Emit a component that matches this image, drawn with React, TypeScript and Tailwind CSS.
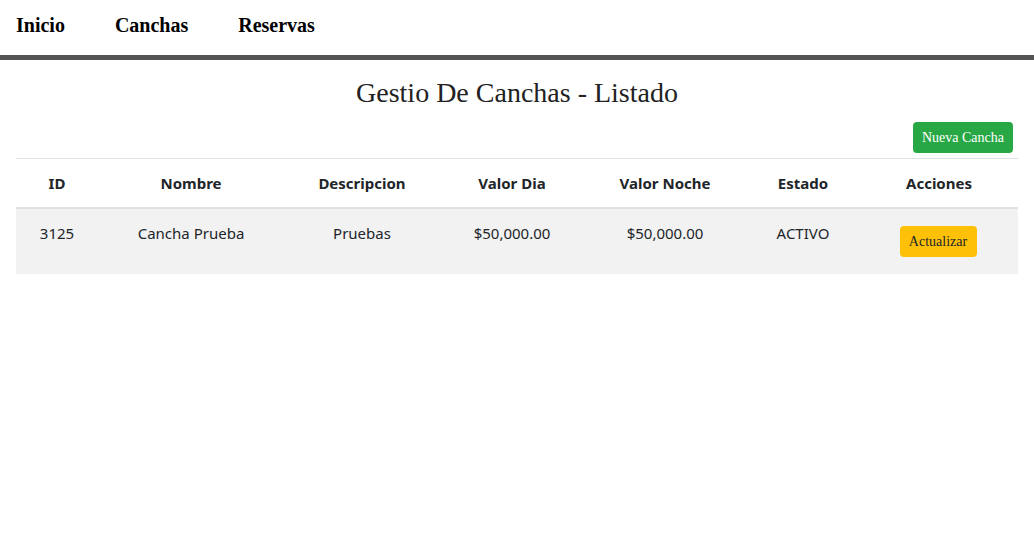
const columns = [
  { label: "ID", width: "w-[82px]" },
  { label: "Nombre", width: "w-[186px]" },
  { label: "Descripcion", width: "w-[156px]" },
  { label: "Valor Dia", width: "w-[144px]" },
  { label: "Valor Noche", width: "w-[162px]" },
  { label: "Estado", width: "w-[114px]" },
  { label: "Acciones", width: "w-[158px]" },
];

const canchas = [
  {
    id: 3125,
    nombre: "Cancha Prueba",
    descripcion: "Pruebas",
    valorDia: "$50,000.00",
    valorNoche: "$50,000.00",
    estado: "ACTIVO",
  },
];

const App = () => {
  return (
    <div className="min-h-screen bg-white">
      {/* Navigation */}
      <nav className="h-[60px] border-b-[5px] border-[#555555] font-['Liberation_Serif',serif]">
        <ul className="flex items-center h-[55px] px-4 gap-[50px] text-[20px] font-bold text-black pb-[5px]">
          <li>Inicio</li>
          <li>Canchas</li>
          <li>Reservas</li>
        </ul>
      </nav>

      <div className="px-4">
        <h1 className="text-center text-[28px] text-[#222] font-['Liberation_Serif',serif] pt-[16px] leading-[34px]">
          Gestio De Canchas - Listado
        </h1>

        <div className="flex justify-end pr-[5px] mt-[12px] mb-[5px]">
          <button className="h-[31px] w-[100px] rounded-[4px] bg-[#28a745] text-white text-[14px] font-['Liberation_Serif',serif]">
            Nueva Cancha
          </button>
        </div>

        <table className="w-[1002px] table-fixed border-collapse font-['Noto_Sans',sans-serif] text-[15px] text-[#212529]">
          <thead>
            <tr className="border-t border-[#dee2e6]">
              {columns.map((c) => (
                <th
                  key={c.label}
                  className={`${c.width} text-center font-bold py-3 leading-6 border-b-2 border-[#dee2e6]`}
                >
                  {c.label}
                </th>
              ))}
            </tr>
          </thead>
          <tbody>
            {canchas.map((c) => (
              <tr key={c.id} className="bg-[#f2f2f2]">
                <td className="text-center align-top py-3 leading-6">{c.id}</td>
                <td className="text-center align-top py-3 leading-6">{c.nombre}</td>
                <td className="text-center align-top py-3 leading-6">{c.descripcion}</td>
                <td className="text-center align-top py-3 leading-6">{c.valorDia}</td>
                <td className="text-center align-top py-3 leading-6">{c.valorNoche}</td>
                <td className="text-center align-top py-3 leading-6">{c.estado}</td>
                <td className="text-center align-top pt-[17px] pb-[17px]">
                  <button className="h-[31px] w-[77px] -translate-x-px rounded-[4px] bg-[#ffc107] text-[#212529] text-[14px] font-['Liberation_Serif',serif]">
                    Actualizar
                  </button>
                </td>
              </tr>
            ))}
          </tbody>
        </table>
      </div>
    </div>
  );
};

export default App;
